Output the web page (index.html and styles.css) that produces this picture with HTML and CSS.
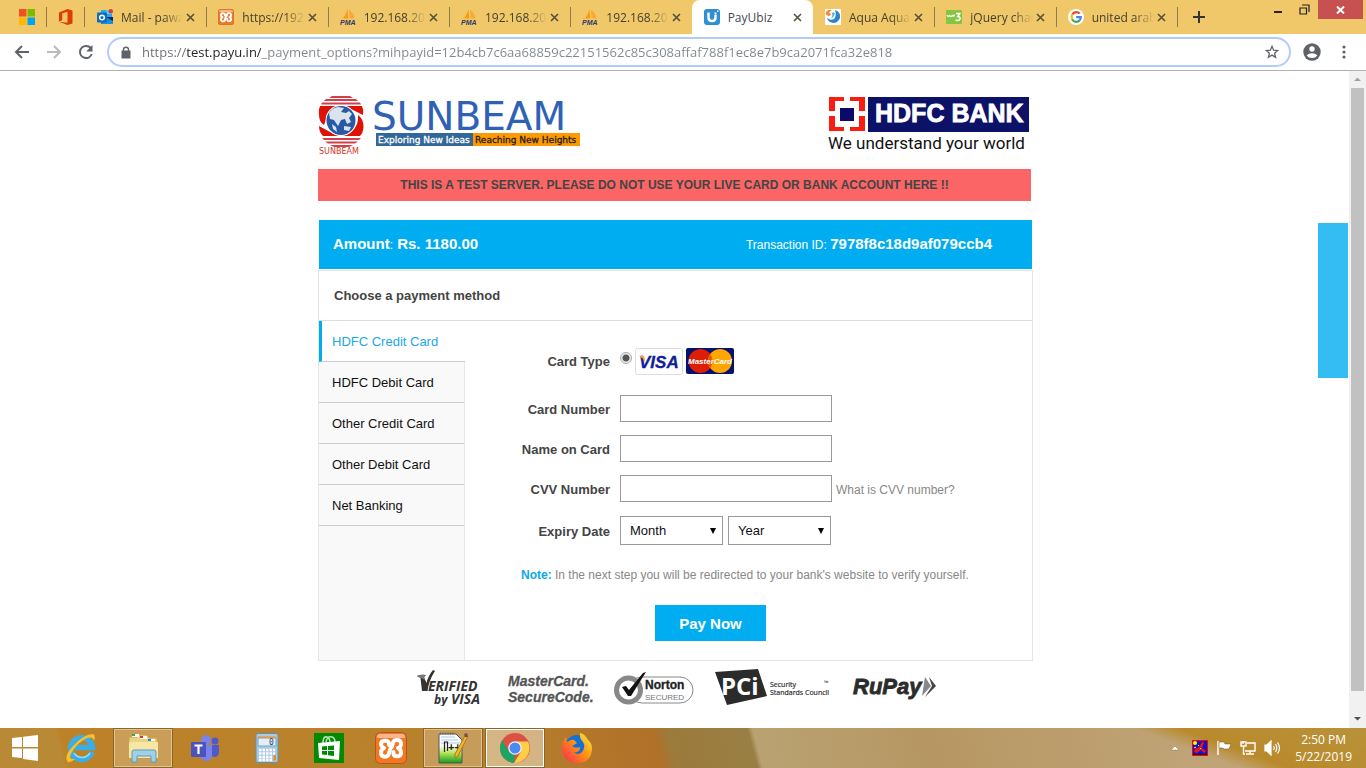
FILE: index.html
```html
<!DOCTYPE html>
<html lang="en">
<head>
<meta charset="utf-8">
<title>PayUbiz</title>
<link rel="stylesheet" href="styles.css">
</head>
<body>
<svg class="sprite" aria-hidden="true">
  <symbol id="pma" viewBox="0 0 16 16">
    <path d="M7.500 0L8.200 9.600H3.200Q6.300 5 7.500 0Z" fill="#f89c0e"/>
    <path d="M4.500 2.500Q4.300 7 1 9.800H3.200Q5 6 4.500 2.500Z" fill="#f9b95c"/>
    <path d="M9 .5Q14 4.500 14.500 9.600H9.500Z" fill="#f7a93a"/>
    <text x="0" y="16" class="pma-text">PMA</text>
  </symbol>
  <symbol id="xampp" viewBox="0 0 32 32">
    <rect x=".5" y=".5" width="31" height="31" rx="5" fill="#f37623" stroke="#b9551a"/>
    <path d="M2 5Q2 2 5 2H27Q30 2 30 5V6H2Z" fill="#f9b58c"/>
    <path d="M14 13V11C13 7.500 6 8 6 12C6 14.500 8 16 9 16C8 16.500 6 18 6 21C6 25 11 25.500 13 23.500C15 21.500 14 17 16 16C18 15 17 10.500 19 8.800C22 7 26 8 26 12C26 14.500 24.500 16 23 16C24.500 16.500 26 18 26 21C26 25 19 25.500 18.500 21.500V20" fill="none" stroke="#fff" stroke-width="4" stroke-linejoin="round" stroke-linecap="round"/>
  </symbol>
  <symbol id="cross" viewBox="0 0 9 9"><path d="M1 1L8 8M8 1L1 8" fill="none" stroke="currentColor" stroke-width="1.600"/></symbol>
</svg>

<header class="browser">
  <nav class="tabstrip" aria-label="Tabs">
    <a class="pinned pinned-first" href="#" aria-label="Microsoft">
      <svg width="16" height="16"><path d="M0 0H7.500V7.500H0Z" fill="#f25022"/><path d="M8.500 0H16V7.500H8.500Z" fill="#7fba00"/><path d="M0 8.500H7.500V16H0Z" fill="#ffb900"/><path d="M8.500 8.500H16V16H8.500Z" fill="#00a4ef"/></svg>
    </a>
    <a class="pinned" href="#" aria-label="Office">
      <svg width="16" height="16"><path d="M1 3.500L9.500 0L14.500 1.500V14.500L9.500 16L1 12.700L9.500 13.700V2.800L4.200 4.200V11.200L1 12.500Z" fill="#e03c00"/></svg>
    </a>
    <div class="tabs">
      <div class="tab">
        <svg width="16" height="16"><path d="M4 1H15V8H4Z" fill="#28a8ea"/><path d="M9.500 1H15V5H9.500Z" fill="#50d9ff"/><path d="M3 8H16V15H4Z" fill="#1490df"/><path d="M9 8L16 12V8Z" fill="#0a2767"/><rect y="3.500" width="10" height="10" rx="1" fill="#0f6cbd"/><circle cx="5" cy="8.500" r="2.300" fill="none" stroke="#fff" stroke-width="1.500"/><circle cx="13.700" cy="2.300" r="2.300" fill="#d93a3a"/></svg>
        <span class="tab-title">Mail - pawan</span><button class="tab-close" aria-label="Close tab"><svg width="9" height="9"><use href="#cross"/></svg></button>
      </div>
      <div class="tab"><svg width="16" height="16"><use href="#xampp"/></svg><span class="tab-title">https://192.1</span><button class="tab-close" aria-label="Close tab"><svg width="9" height="9"><use href="#cross"/></svg></button></div>
      <div class="tab"><svg width="16" height="16"><use href="#pma"/></svg><span class="tab-title">192.168.20.</span><button class="tab-close" aria-label="Close tab"><svg width="9" height="9"><use href="#cross"/></svg></button></div>
      <div class="tab"><svg width="16" height="16"><use href="#pma"/></svg><span class="tab-title">192.168.20.</span><button class="tab-close" aria-label="Close tab"><svg width="9" height="9"><use href="#cross"/></svg></button></div>
      <div class="tab"><svg width="16" height="16"><use href="#pma"/></svg><span class="tab-title">192.168.20.</span><button class="tab-close" aria-label="Close tab"><svg width="9" height="9"><use href="#cross"/></svg></button></div>
      <div class="tab tab-active">
        <svg width="16" height="16"><rect width="16" height="16" rx="3" fill="#2f8fd0"/><path d="M4.500 3.500V8.500Q4.500 12 8 12Q11.500 12 11.500 8.500V6" fill="none" stroke="#fff" stroke-width="2.500"/><path d="M10.500 3.500H12.500V5.500H10.500ZM13 1.500H14.500V3H13Z" fill="#fff"/></svg>
        <span class="tab-title">PayUbiz</span><button class="tab-close" aria-label="Close tab"><svg width="9" height="9"><use href="#cross"/></svg></button>
      </div>
      <div class="tab">
        <svg width="16" height="16"><rect width="16" height="16" fill="#fff"/><path d="M1 3Q3 0 7 1Q5 2 4 4Q6 4 6 6Q3 8 2 6Q0 6 1 3Z" fill="#f28a3c"/><path d="M10 1Q16 3 15 9Q13 14 8 14Q3 13 2 9Q6 12 9 10Q12 7 10 1Z" fill="#2b86c9"/><path d="M7 4Q9 2 10 5Q9 8 6 9Q8 7 7 4Z" fill="#5ab4e2"/></svg>
        <span class="tab-title">Aqua Aqua</span><button class="tab-close" aria-label="Close tab"><svg width="9" height="9"><use href="#cross"/></svg></button>
      </div>
      <div class="tab">
        <svg width="16" height="16"><rect y="1" width="16" height="14" rx="1" fill="#86c540"/><path d="M1 6Q2 8.500 3.500 6.500Q5 8.500 6.500 6.500Q8 8 8.500 5.500" fill="none" stroke="#fff" stroke-width="1.300"/><path d="M10 4.500H13.800L11.800 7.500Q14.500 7.500 14 10Q13 12.300 9.500 11" fill="none" stroke="#fff" stroke-width="1.500"/></svg>
        <span class="tab-title">jQuery chart</span><button class="tab-close" aria-label="Close tab"><svg width="9" height="9"><use href="#cross"/></svg></button>
      </div>
      <div class="tab">
        <svg width="16" height="16" fill="none" stroke-width="2.200"><circle cx="8" cy="8" r="8" fill="#fff"/><path d="M4.300 5.500Q5.800 3.100 8.200 3.100Q10.100 3.100 11.700 4.500" stroke="#ea4335"/><path d="M4.300 5.300Q2.900 8 4.300 10.700" stroke="#fbbc05"/><path d="M4.200 10.500Q5.800 13 8.200 12.900Q10 12.900 11.400 11.700" stroke="#34a853"/><path d="M8.200 8.100H12.800Q12.900 10.300 11.300 11.800" stroke="#4285f4"/></svg>
        <span class="tab-title">united arab</span><button class="tab-close" aria-label="Close tab"><svg width="9" height="9"><use href="#cross"/></svg></button>
      </div>
    </div>
    <div class="strip-end">
      <button class="new-tab" aria-label="New tab"><svg width="12" height="12"><path d="M6 0V12M0 6H12" stroke="#333" stroke-width="2"/></svg></button>
      <div class="window-buttons">
        <button class="win-min" aria-label="Minimise"><svg width="10" height="11"><path d="M1 10H9" stroke="#222" stroke-width="2"/></svg></button>
        <button class="win-max" aria-label="Restore"><svg width="12" height="11" fill="none" stroke="#222"><path d="M1 4H7.500V10H1Z" stroke-width="1.200"/><path d="M3 1H10V8" stroke-width="1.200"/></svg></button>
        <button class="win-close" aria-label="Close"><svg width="9" height="8"><path d="M1 .5L8 7.500M8 .5L1 7.500" stroke="#fff" stroke-width="2"/></svg></button>
      </div>
    </div>
  </nav>
  <div class="toolbar">
    <div class="nav-buttons">
      <button aria-label="Back"><svg width="16" height="14" fill="none" stroke="#5f6368" stroke-width="2"><path d="M15 7H2M8 1L2 7L8 13"/></svg></button>
      <button aria-label="Forward"><svg width="16" height="14" fill="none" stroke="#bababa" stroke-width="2"><path d="M1 7H14M8 1L14 7L8 13"/></svg></button>
      <button aria-label="Reload"><svg width="16" height="16"><path d="M13 4Q11 2 8 2A6 6 0 1 0 13.700 10" fill="none" stroke="#5f6368" stroke-width="2"/><path d="M14.500 1V7.500H8.200Z" fill="#5f6368"/></svg></button>
    </div>
    <div class="address">
      <svg width="10" height="13"><rect x="1" y="5" width="8" height="7" fill="#5f6368" stroke="#5f6368" stroke-width="1"/><path d="M2.500 5V3.500Q2.500 1.200 5 1.200Q7.500 1.200 7.500 3.500V5" fill="none" stroke="#5f6368" stroke-width="1.400"/></svg>
      <input class="url" type="text" aria-label="Address" value="https://test.payu.in/_payment_options?mihpayid=12b4cb7c6aa68859c22151562c85c308affaf788f1ec8e7b9ca2071fca32e818">
      <button aria-label="Bookmark"><svg width="14" height="14"><path d="M7 1.300L8.600 5.200L12.800 5.500L9.600 8.200L10.600 12.400L7 10.100L3.400 12.400L4.400 8.200L1.200 5.500L5.400 5.200Z" fill="none" stroke="#5f6368" stroke-width="1.300"/></svg></button>
    </div>
    <button aria-label="Profile"><svg width="18" height="18"><circle cx="9" cy="9" r="8.700" fill="#5f6368"/><circle cx="9" cy="6" r="2.700" fill="#fff"/><path d="M3.700 12.500Q5.500 10.300 9 10.300Q12.500 10.300 14.300 12.500Q12.500 15 9 15Q5.500 15 3.700 12.500Z" fill="#fff"/></svg></button>
    <button aria-label="Menu"><svg width="4" height="14" fill="#5f6368"><circle cx="2" cy="2" r="1.600"/><circle cx="2" cy="7" r="1.600"/><circle cx="2" cy="12" r="1.600"/></svg></button>
  </div>
</header>

<div class="viewport">
  <main class="page">
    <div class="column">
      <div class="logos">
        <svg class="logo-sunbeam" width="264" height="62" role="img" aria-label="Sunbeam">
          <g fill="#c9202b">
            <path d="M14 1H32L35 3H11ZM8 4H38L40 6H6ZM4 7.500H42L43 9.500H3Z" opacity=".85"/>
            <path d="M2 11H44Q46 15 45 20L33 14Q22 8 12 15L6 30Q1 27 1 20Q0 15 2 11Z" fill="#dd1206"/>
            <path d="M40 20Q46 24 45.500 33Q45 38 42 41H5Q1 37 1 31L14 38Q24 44 34 36Q41 30 40 20Z" fill="#dd1206"/>
            <path d="M4 43H43L41 45H6ZM7 46.500H40L37 48.500H10ZM12 50H35L31 52H16Z" opacity=".85"/>
          </g>
          <circle cx="23" cy="25.500" r="15.500" fill="#fff"/><circle cx="23" cy="25.500" r="14.500" fill="#275aa5"/>
          <path d="M11 18Q14 13 20 12L26 13L23 17L28 18L31 16L34 19L31 23L33 27L29 29L27 24L23 25L20 31L16 25L12 24ZM26 31L33 32L31 36L26 35ZM14 29L18 32L19 37L15 34Z" fill="#dae3ee"/>
          <text x="1" y="59" class="sun-small">SUNBEAM</text>
          <text x="54" y="35" class="sun-name">SUNBEAM</text>
          <rect x="58" y="38" width="97" height="13" fill="#326799"/><rect x="155" y="38" width="107" height="13" fill="#f90"/>
          <text x="60" y="48" class="sun-tag tag-light">Exploring New Ideas</text>
          <text x="157" y="48" class="sun-tag tag-dark">Reaching New Heights</text>
        </svg>
        <svg class="logo-hdfc" width="202" height="60" role="img" aria-label="HDFC Bank">
          <path d="M1 1H37V36H1Z" fill="#fff"/>
          <path d="M1 2H16V6H7V16H1ZM22 2H37V16H31V6H22ZM1 21H7V32H16V36H1ZM31 21H37V36H22V32H31Z" fill="#f91c10"/>
          <path d="M12 13H26V26H12Z" fill="#0c0a69"/>
          <path d="M40 2H201V37H40Z" fill="#0c1268"/>
          <text x="47" y="27" class="hdfc-name">HDFC BANK</text>
          <text x="0" y="54" class="hdfc-tag">We understand your world</text>
        </svg>
      </div>
      <p class="test-banner">THIS IS A TEST SERVER. PLEASE DO NOT USE YOUR LIVE CARD OR BANK ACCOUNT HERE !!</p>
      <div class="summary">
        <div><b>Amount</b><small>:</small> <b>Rs. 1180.00</b></div>
        <div class="txn"><span>Transaction ID: </span><b>7978f8c18d9af079ccb4</b></div>
      </div>
      <section class="panel">
        <h1 class="panel-title">Choose a payment method</h1>
        <div class="panel-body">
          <nav class="methods" aria-label="Payment methods">
            <a class="method method-active" href="#">HDFC Credit Card</a>
            <a class="method" href="#">HDFC Debit Card</a>
            <a class="method" href="#">Other Credit Card</a>
            <a class="method" href="#">Other Debit Card</a>
            <a class="method" href="#">Net Banking</a>
          </nav>
          <form class="card-form">
            <div class="fields">
              <label class="type-row" for="ctype">Card Type</label>
              <div class="types type-row">
                <input type="radio" id="ctype" name="ctype" checked>
                <svg width="48" height="27" role="img" aria-label="Visa"><rect x=".5" y=".5" width="47" height="26" rx="2" fill="#fefefe" stroke="#ddd"/><text x="4" y="20" class="visa">VISA</text><path d="M4 8H8Q9.500 8 9.800 11L10 14Q8 10 4 8Z" fill="#f5a623"/></svg>
                <svg width="48" height="27" role="img" aria-label="MasterCard"><rect width="48" height="26" rx="2" fill="#04116f"/><circle cx="14.500" cy="13" r="12" fill="#dd1e05"/><circle cx="34" cy="13" r="12" fill="#fea500"/><path d="M24.250 6A12 12 0 0 1 24.250 20A12 12 0 0 1 24.250 6Z" fill="#e8560a"/><text x="24" y="16" class="mc">MasterCard</text></svg>
              </div>
              <label for="cnum">Card Number</label><div><input class="text" id="cnum" type="text"></div>
              <label for="cname">Name on Card</label><div><input class="text" id="cname" type="text"></div>
              <label for="cvv">CVV Number</label><div class="cvv"><input class="text" id="cvv" type="text"><a href="#">What is CVV number?</a></div>
              <label for="month">Expiry Date</label>
              <div class="expiry"><select id="month"><option>Month</option></select><select aria-label="Year"><option>Year</option></select></div>
            </div>
            <p class="note"><b>Note:</b> In the next step you will be redirected to your bank's website to verify yourself.</p>
            <button class="pay" type="button">Pay Now</button>
          </form>
        </div>
      </section>
      <div class="badges">
        <svg width="72" height="38" role="img" aria-label="Verified by Visa">
          <path d="M3 8Q7 6 12 7L10 9L12.500 15Q14 8 19 2L21 3Q15 12 13.500 23H8L6.500 10Z" fill="#333"/>
          <path d="M3 8Q7 6 12 7L10 9L11 12Z" fill="#777"/>
          <text x="14" y="23" class="b-ver">ERIFIED</text><text x="20" y="36" class="b-by">by</text><text x="37" y="36" class="b-ver">VISA</text>
        </svg>
        <svg width="88" height="38" role="img" aria-label="MasterCard SecureCode">
          <text x="2" y="18" class="b-mc">MasterCard.</text><text x="2" y="34" class="b-mc">SecureCode.</text>
        </svg>
        <svg width="80" height="38" role="img" aria-label="Norton Secured">
          <rect x="15" y="9" width="64" height="26" rx="13" fill="#fff" stroke="#888"/>
          <circle cx="14.500" cy="22" r="12" fill="#fff" stroke="#888" stroke-width="5"/>
          <path d="M8 19L12 18L15 22L29 5L32 4L17 28L14 28Z" fill="#111"/>
          <text x="31" y="21" class="b-norton">Norton</text><text x="31" y="32" class="b-secured">SECURED</text>
        </svg>
        <svg width="118" height="38" role="img" aria-label="PCI Security Standards Council">
          <path d="M1 4L44 1L53 28L13 37Z" fill="#2b2b2b"/>
          <text x="7" y="27" class="b-pci">PCi</text>
          <text x="56" y="19" class="b-ssc">Security</text><text x="56" y="27" class="b-ssc">Standards Council</text><text x="110" y="17" class="b-tm">™</text>
        </svg>
        <svg width="86" height="38" role="img" aria-label="RuPay">
          <text x="1" y="26" class="b-rupay">RuPay</text>
          <path d="M73 9L79 18L70 28Z" fill="#888"/><path d="M77 9L84 18L73 29L80 18Z" fill="#444"/>
        </svg>
      </div>
    </div>
    <div class="side-tab"></div>
  </main>
  <div class="scrollbar" aria-hidden="true">
    <svg width="17" height="17"><path d="M5 10L8.500 6.500L12 10Z" fill="#a3a3a3"/></svg>
    <div class="thumb"></div>
    <svg width="17" height="17"><path d="M5 6L8.500 9.500L12 6Z" fill="#505050"/></svg>
  </div>
</div>

<footer class="taskbar">
  <button class="start" aria-label="Start"><svg width="28" height="28"><path d="M1 4L11 3V13H1ZM12 2.700L27 1V13H12ZM1 14.500H11V24L1 23ZM12 14.500H27V27L12 25Z" fill="#fff"/></svg></button>
  <button class="task" aria-label="Internet Explorer"><svg width="32" height="32"><path d="M27 20A11 11 0 1 1 27.500 15.500H10" fill="none" stroke="#39aee8" stroke-width="5.500"/><path d="M25 21A9.500 9.500 0 0 1 9 21" fill="none" stroke="#8fdcf8" stroke-width="1.500"/><path d="M3 30Q-2 25 8 14Q19 2 28 2Q31 3 29 9Q28 4 22 6Q13 10 7 20Q2 28 10 27Q6 31 3 30Z" fill="#f5c229"/></svg></button>
  <button class="task task-open" aria-label="File Explorer"><svg width="32" height="32"><path d="M2 5H10L12 3H20L22 6H30V25H2Z" fill="#ecd381" stroke="#c9a44a"/><path d="M5 2H12V5H5Z" fill="#fff"/><path d="M5 2H8V4H5Z" fill="#2fa84f"/><path d="M13 4H20V7H13Z" fill="#fff"/><path d="M13 4H16V6H13Z" fill="#d33"/><path d="M21 7H28V9H21Z" fill="#fff"/><path d="M21 7H24V9H21Z" fill="#28d"/><path d="M2 10H31V26H2Z" fill="#f8e6a4"/><path d="M5 30V20Q5 18 7 18H27Q29 18 29 20V30H24V24H10V30Z" fill="#9fd0e6" stroke="#5c9bbd"/></svg></button>
  <button class="task" aria-label="Teams"><svg width="30" height="28"><circle cx="16" cy="6" r="5" fill="#7b83eb"/><circle cx="25" cy="7" r="3.500" fill="#5059c9"/><path d="M20 11H29V18Q29 23 24 23Q20 22 20 18Z" fill="#5059c9"/><path d="M10 11H22V20Q22 27 16 27Q10 26 10 20Z" fill="#7b83eb"/><rect x="1" y="8" width="15" height="15" rx="1" fill="#4b53bc"/><path d="M4.500 11.500H12.500M8.500 11.500V20" stroke="#fff" stroke-width="2.200"/></svg></button>
  <button class="task" aria-label="Calculator"><svg width="24" height="30"><rect x="1" y=".5" width="22" height="29" rx="2" fill="#a9cbe4" stroke="#5f91b8"/><rect x="3" y="3" width="18" height="2" fill="#f5a24a"/><rect x="3" y="5" width="18" height="8" fill="#e3eef6" stroke="#7ba1bf"/><text x="14" y="12" class="calc">0</text><path d="M4 17H20M4 20.500H20M4 24H17M4 27H17" stroke="#fff" stroke-width="2.500" stroke-dasharray="2.500 1"/><path d="M18.500 22H21V27.500H18.500Z" fill="#f08a1c"/></svg></button>
  <button class="task" aria-label="Store"><svg width="30" height="30"><rect width="30" height="30" fill="#008a00"/><path d="M9 10Q9 3 13 4Q16 5 16 10M12 9Q13 3 18 4Q21 5 21 9" fill="none" stroke="#b8e2b8" stroke-width="1.500"/><path d="M4 10L26 8L25 27L5 25Z" fill="#fff"/><path d="M8 13.500L13 13V17H8ZM14 13L20 12.500V17H14ZM8 18H13V22L8 21.500ZM14 18H20V23L14 22.200Z" fill="#008a00"/></svg></button>
  <button class="task" aria-label="XAMPP"><svg width="32" height="32"><use href="#xampp"/></svg></button>
  <button class="task task-open" aria-label="Notepad++"><svg width="32" height="32"><defs><linearGradient id="np" x2="0" y2="1"><stop offset=".4" stop-color="#fff"/><stop offset=".65" stop-color="#b6e65a"/><stop offset="1" stop-color="#159a1c"/></linearGradient></defs><path d="M2 2H19L25 8V31H2Z" fill="url(#np)" stroke="#555"/><path d="M4 5H18M4 8H21M4 11H23" stroke="#a8c8e0"/><path d="M3 1.500H18" stroke="#666" stroke-width="2" stroke-dasharray="1 1.500"/><text x="11" y="19" class="np-plus">++</text><path d="M7.500 20V10H10.500V19" fill="none" stroke="#222" stroke-width="1.200"/><path d="M29 2L31 4L21 24L18 26L18 22Z" fill="#f3b52d" stroke="#a87820"/><path d="M27 2L30 1L31 5L28 5Z" fill="#7c4a58"/></svg></button>
  <button class="task task-active" aria-label="Chrome"><svg width="30" height="30"><circle cx="15" cy="15" r="15" fill="#dd5144"/><path d="M2.100 7.300L9 18.500L15 21.500L14.500 30A15 15 0 0 1 2.100 7.300Z" fill="#1da362"/><path d="M28 8.500A15 15 0 0 1 14 30L21 18.500L20.500 12L16 8.500Z" fill="#ffcd46"/><circle cx="15" cy="15" r="6.800" fill="#f1f1f1"/><circle cx="15" cy="15" r="5.500" fill="#4a8af4"/></svg></button>
  <button class="task" aria-label="Firefox"><svg width="32" height="32"><defs><linearGradient id="fx" x1="1" y1="0" x2="0" y2=".9"><stop stop-color="#fff44f"/><stop offset=".45" stop-color="#ff980e"/><stop offset="1" stop-color="#ff2a55"/></linearGradient></defs><circle cx="16" cy="15" r="12" fill="#1470d8"/><path d="M19 1Q24 2 27 8Q31 11 31 17Q30 31 16 31Q2 30 1 17Q1 10 5 5L6 10L10 8Q13 7 14 9L16 11Q13 13 11 14Q14 17 19 15Q19 21 13 20Q17 24 21 20Q25 15 22 10Q18 6 19 1Z" fill="url(#fx)"/></svg></button>
  <div class="tray">
    <svg width="10" height="6"><path d="M1 5L5 1L9 5Z" fill="#fff" stroke="#8a7a55" stroke-width=".5"/></svg>
    <svg width="16" height="16"><path d="M.5 .5H15.500V15.500H.5Z" fill="#1112c9" stroke="#f00"/><circle cx="3" cy="3" r="2" fill="#ff0"/><path d="M1 14H15V15H1Z" fill="#111"/><path d="M3 9L7 7L10 2L12 2L10 8L14 11L12 13L9 10L5 13L2 12Z" fill="#e21522"/><path d="M2 8L4 7M6 6L7 5M8 9L9 8" stroke="#ff0"/></svg>
    <svg width="16" height="16"><path d="M2 1V15" stroke="#fff" stroke-width="1.500"/><path d="M3 2H8L9 4H15L13 9H8L7 8H3Z" fill="#fff" stroke="#6b5525" stroke-width=".5"/></svg>
    <svg width="16" height="16" fill="none" stroke="#fff" stroke-width="1.400"><path d="M7 3H15V11H5M10 11V14M6 14H14"/><path d="M1 2H6V6H1ZM3.500 6V14H5M3 1V4"/></svg>
    <svg width="17" height="16" fill="none" stroke="#fff" stroke-width="1.200"><path d="M1 5H3L7 1V15L3 11H1Z" fill="#fff"/><path d="M9.500 6Q11 8 9.500 10M11.500 4Q14 8 11.500 12M13.500 2.500Q17.500 8 13.500 13.500"/></svg>
    <div class="clock"><span>2:50 PM</span><span>5/22/2019</span></div>
  </div>
</footer>
</body>
</html>
```

FILE: styles.css
```css
* { box-sizing: border-box; }
body {
  margin: 0;
  height: 100vh;
  display: flex;
  flex-direction: column;
  overflow: hidden;
  background: #fff;
  font-family: "Liberation Sans", Arial, sans-serif;
  font-size: 13px;
  color: #444;
}
button { border: 0; padding: 0; background: none; font: inherit; display: flex; align-items: center; justify-content: center; }
a { text-decoration: none; color: inherit; }
svg { display: block; flex: none; }
h1, p { margin: 0; }
.sprite { position: absolute; width: 0; height: 0; }
.pma-text { font: italic bold 7px "Liberation Sans", sans-serif; fill: #33366b; }

/* Browser frame */
.browser { flex: none; font-family: "Open Sans", "Noto Sans", sans-serif; }
.tabstrip { display: flex; height: 34px; background: #f0c869; }
.pinned { width: 38px; display: flex; align-items: center; justify-content: center; background: linear-gradient(#8f7c4c, #8f7c4c) right center / 1px 20px no-repeat; }
.pinned-first { width: 47px; padding-left: 6px; }
.tabs { flex: 1; display: flex; min-width: 0; }
.tab {
  flex: 1 1 0;
  min-width: 0;
  display: flex;
  align-items: center;
  gap: 8px;
  padding: 0 11px 0 12px;
  color: #45412f;
  font-size: 12px;
  background: linear-gradient(#8f7c4c, #8f7c4c) left center / 1px 20px no-repeat;
}
.tab:first-child, .tab-active + .tab { background: none; }
.tab-active { background: #fff; border-radius: 8px 8px 0 0; color: #45494d; }
.tab-title { flex: 1; min-width: 0; margin-right: -5px; overflow: hidden; white-space: nowrap; mask-image: linear-gradient(to right, #000 68%, transparent 100%); }
.tab-active .tab-title { mask-image: none; }
.tab-close { color: #55503a; }
.strip-end { width: 189px; display: flex; justify-content: space-between; background: linear-gradient(#8f7c4c, #8f7c4c) left center / 1px 20px no-repeat; }
.new-tab { width: 44px; height: 34px; }
.window-buttons { display: flex; align-items: flex-start; padding-right: 3px; }
.win-min { width: 28px; height: 14px; }
.win-max { width: 26px; height: 18px; }
.win-close { width: 45px; height: 19px; background: #c75050; }

.toolbar { display: flex; align-items: center; gap: 12px; height: 37px; padding: 0 20px 0 14px; border-bottom: 1px solid #b0b0b0; }
.nav-buttons { display: flex; gap: 16px; margin-right: 1px; }
.address { flex: 1; display: flex; align-items: center; height: 30px; padding: 0 10px 0 12px; border: 2px solid #b1ccfb; border-radius: 15px; }
.url {
  flex: 1;
  min-width: 0;
  margin: 0 11px;
  padding: 0;
  border: 0;
  outline: 0;
  font: 13px/24px "Open Sans", "Noto Sans", sans-serif;
  color: transparent;
  background: linear-gradient(to right, #6a6e73 45px, #202124 45px, #202124 119px, #80868b 119px);
  background-clip: text;
  -webkit-background-clip: text;
}
.toolbar > button:last-child { margin-left: 9px; }

/* Page */
.viewport { flex: 1; min-height: 0; display: flex; }
.page { flex: 1; min-width: 0; position: relative; overflow: hidden; padding: 24px 0 0 2px; }
.column { width: 53%; min-width: 715px; margin: 0 auto; }
.logos { display: flex; justify-content: space-between; padding-right: 3px; }
.sun-small { font: 8px "DejaVu Sans", sans-serif; fill: #d33327; }
.sun-name { font: 39px "DejaVu Sans", sans-serif; fill: #2f62b5; }
.sun-tag { font: 9px "DejaVu Sans", sans-serif; stroke-width: .3px; }
.tag-light { fill: #fff; stroke: #fff; }
.tag-dark { fill: #222; stroke: #222; }
.hdfc-name { font: bold 25px "Liberation Sans", sans-serif; fill: #fff; stroke: #fff; stroke-width: .8px; }
.hdfc-tag { font: 17px Roboto, "Liberation Sans", sans-serif; fill: #111; }
.test-banner { margin: 12px 2px 0 0; line-height: 32px; background: #fb6565; text-align: center; font-weight: bold; font-size: 12px; }
.summary {
  display: flex;
  justify-content: space-between;
  align-items: center;
  height: 49px;
  margin: 19px 1px 1px;
  padding: 0 40px 2px 14px;
  background: #00adf0;
  color: #fff;
  font-size: 15px;
}
.summary small, .txn span { font-size: 12px; }
.panel { border: 1px solid #e5e5e5; }
.panel-title { padding-left: 15px; line-height: 49px; font-size: 13px; border-bottom: 1px solid #ddd; }
.panel-body { display: flex; }
.methods { width: 146px; background: #f9f9f9; border-right: 1px solid #e7e7e7; }
.method { display: block; height: 41px; line-height: 42px; padding-left: 13px; border-bottom: 1px solid #ccc; color: #111; }
.method-active { padding-left: 10px; border-left: 3px solid #00adf0; background: #fff; color: #1ba8e8; margin-right: -1px; }
.card-form { flex: 1; padding: 27px 0 19px; }
.fields { display: grid; grid-template-columns: 145px 1fr; gap: 13px 10px; align-items: center; }
.fields label { text-align: right; font-weight: bold; padding-top: 2px; }
.fields .type-row { margin-bottom: 7px; padding-top: 0; }
.types { display: flex; gap: 3px; }
.types input {
  appearance: none;
  width: 12px;
  height: 12px;
  margin: 4px 0 0;
  border: 1px solid #aaa;
  border-radius: 50%;
  background: radial-gradient(circle, #555 3px, #eee 4px);
}
.text { display: block; width: 212px; height: 27px; padding: 0 8px; border: 1px solid #999; background: #fff; font: inherit; }
.cvv { display: flex; align-items: center; gap: 4px; color: #888; font-size: 12px; }
.cvv a { padding-top: 2px; }
.expiry { display: flex; gap: 5px; margin-top: 1px; }
.expiry select {
  appearance: none;
  width: 103px;
  height: 29px;
  padding: 0 9px;
  border: 1px solid #999;
  border-radius: 0;
  color: #111;
  font: inherit;
  background: #fff url("data:image/svg+xml,%3Csvg xmlns='http://www.w3.org/2000/svg' width='6' height='6'%3E%3Cpath d='M0 0H6L3 6Z'/%3E%3C/svg%3E") right 6px center no-repeat;
}
.note { margin: 22px 0 22px 56px; line-height: 16px; font-size: 12px; color: #888; }
.note b { color: #0aa9ea; }
.pay { width: 111px; height: 36px; margin-left: 190px; background: #00adf0; color: #fff; font-weight: bold; font-size: 15px; }
.badges { display: flex; justify-content: center; gap: 20px; padding-top: 7px; }
.b-ver { font: italic bold 14px "Open Sans", sans-serif; fill: #333; }
.b-by { font: italic bold 12px "Open Sans", sans-serif; fill: #333; }
.b-mc { font: italic bold 14px "Liberation Sans", sans-serif; fill: #555; stroke: #555; stroke-width: .3px; }
.b-norton { font: bold 12px "Liberation Sans", sans-serif; fill: #222; stroke: #222; stroke-width: .3px; }
.b-secured { font: 8px "Liberation Sans", sans-serif; fill: #777; }
.b-pci { font: bold 24px "Open Sans", sans-serif; fill: #fff; }
.b-ssc { font: 7px "Open Sans", sans-serif; fill: #333; stroke: #333; stroke-width: .2px; }
.b-tm { font: 6px "Open Sans", sans-serif; fill: #333; }
.b-rupay { font: italic 900 22px "Liberation Sans", sans-serif; fill: #2b2b2b; stroke: #2b2b2b; stroke-width: .8px; }
.visa { font: italic bold 17px "Liberation Sans", sans-serif; fill: #10209a; stroke: #10209a; stroke-width: .3px; }
.mc { font: italic bold 8px "Liberation Sans", sans-serif; fill: #fff; text-anchor: middle; }
.side-tab { position: absolute; top: 152px; right: 1px; width: 30px; height: 155px; background: #33bdf3; }
.scrollbar { width: 17px; display: flex; flex-direction: column; background: #f1f1f1; }
.thumb { flex: 1; margin: 0 2px 20px; background: #c1c1c1; }

/* Taskbar */
.taskbar {
  flex: none;
  display: flex;
  align-items: center;
  height: 40px;
  background:
    linear-gradient(20deg, rgb(185 138 40 / 0) 60px, #b98a2c 76px, #b9923a 140px) right / 300px 40px no-repeat,
    linear-gradient(75deg, #b98a35 0, #b98a35 62px, #bd8228 68px, #b7812d 480px, #b07028 640px, #9c7b3c 654px, #9a7f44 732px, #b9a272 737px, #b69763 900px, #c0a376 1150px);
}
.start { width: 50px; height: 40px; }
.task { width: 58px; height: 38px; margin: 0 2px; }
.task-open { border: 1px solid #e0c294; background: rgb(255 255 255 / .22); outline: 1px solid #8d6524; }
.task-active { border: 1px solid #fff; background: rgb(255 255 255 / .42); outline: 1px solid #8d6524; }
.tray { margin-left: auto; padding-right: 14px; display: flex; align-items: center; gap: 8px; }
.tray svg:first-child { margin-right: 4px; }
.clock { display: flex; flex-direction: column; align-items: center; margin-left: 6px; font: 12px/17px "Open Sans", "Noto Sans", sans-serif; color: #fff; }

/* Taskbar icon lettering */
.calc { font: 8px "DejaVu Sans Mono", monospace; fill: #345; }
.np-plus { font: bold 11px "Liberation Sans", sans-serif; fill: #222; }
```
